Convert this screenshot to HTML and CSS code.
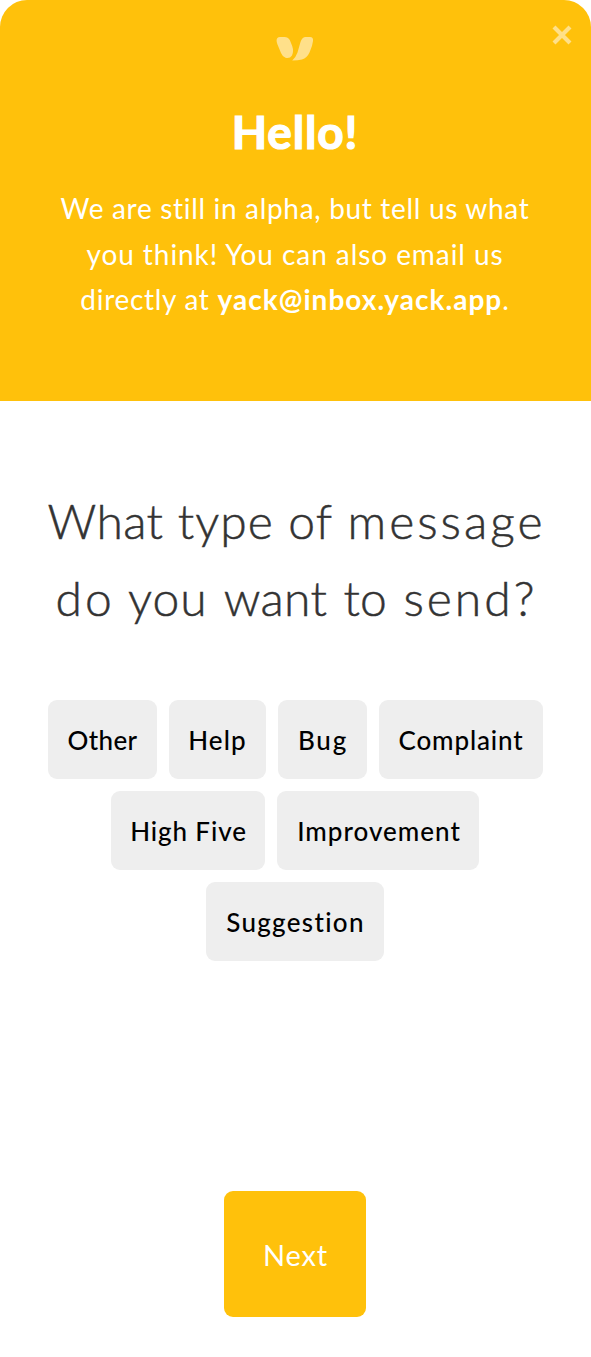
FILE: index.html
```html
<!DOCTYPE html>
<html lang="en">
<head>
<meta charset="utf-8">
<title>Yack</title>
<link rel="stylesheet" href="styles.css">
</head>
<body>
<main class="widget">
  <header class="header">
    <svg class="logo" viewBox="0 0 38 26" aria-hidden="true">
      <path d="M4 1H8.500Q12 1 13.800 4L16.200 10Q18 15.500 16 19.500Q13.700 23 9.500 21.800Q6.500 20.700 5 17L1.300 8Q-1 1.500 4 1Z"/>
      <path d="M29 1H34Q37.500 1 37 5Q36.500 10 33.500 16.500Q31 22 26 23.500Q22 24.500 16.200 24.500Q20 21 21.500 16.500L24.500 6Q26 1.300 29 1Z"/>
    </svg>
    <button class="close" aria-label="Close">
      <svg viewBox="0 0 20 20"><path d="M2 2 18 18M18 2 2 18"/></svg>
    </button>
    <h1 class="hello">Hello!</h1>
    <p class="intro">
      <span class="line intro-a">We are still in alpha, but tell us what</span>
      <span class="line intro-b">you think! You can also email us</span>
      <span class="line intro-c">directly at <b class="email">yack@inbox.yack.app</b>.</span>
    </p>
  </header>
  <section class="content">
    <h2 class="question">
      <span class="question-line">
        <span class="tight">What</span>
        <span class="snug">type</span>
        <span class="snug">of</span>
        <span class="wide">message</span>
      </span>
      <span class="question-line inset">
        <span class="wide">do</span>
        <span class="snug">you</span>
        <span class="tight">want</span>
        <span class="tight">to</span>
        <span class="wide">send?</span>
      </span>
    </h2>
    <div class="chips">
      <button class="chip other">Other</button>
      <button class="chip help">Help</button>
      <button class="chip bug">Bug</button>
      <button class="chip complaint">Complaint</button>
      <button class="chip high-five">High Five</button>
      <button class="chip improvement">Improvement</button>
      <button class="chip suggestion">Suggestion</button>
    </div>
  </section>
  <button class="next">Next</button>
</main>
</body>
</html>
```
FILE: styles.css
```css
* { box-sizing: border-box; }
body { margin: 0; background: #fff; font-family: Lato, "Open Sans", sans-serif; }
button { border: 0; padding: 0; font-family: inherit; }
.widget { height: 1357px; display: flex; flex-direction: column; align-items: center; padding-bottom: 40px; }
.header { position: relative; width: 100%; height: 401px; background: #ffc10b; border-radius: 27px 27px 0 0; color: #fff; text-align: center; padding: 36px 1px 0 0; }
.logo { display: block; width: 38px; height: 26px; margin: 0 auto; fill: #ffe08a; }
.close { position: absolute; top: 25px; right: 19px; width: 20px; height: 20px; background: none; }
.close svg { display: block; width: 20px; height: 20px; overflow: visible; stroke: #ffe08a; stroke-width: 4.2; fill: none; }
.hello { margin: 40px 0 0; font-size: 46px; line-height: 60px; font-weight: 700; letter-spacing: 0.8px; -webkit-text-stroke: 1.2px #fff; stroke-linejoin: round; }
.intro { margin: 24px 0 0; font-size: 28px; line-height: 45.500px; }
.line { display: block; white-space: nowrap; }
.intro-a { letter-spacing: 0.68px; }
.intro-b { letter-spacing: 0.93px; }
.intro-c { letter-spacing: 0.7px; }
.email { font-weight: 700; letter-spacing: 1.05px; }
.content { width: 495px; margin: 81px 1px 0 0; }
.question { margin: 0; color: #333; font-size: 48px; line-height: 77px; font-weight: 300; -webkit-text-stroke: 0.5px #333; }
.question-line { display: flex; justify-content: space-between; white-space: nowrap; }
.inset { padding: 0 8px 0 8px; }
.tight { letter-spacing: 0.3px; }
.snug { letter-spacing: 1px; }
.wide { letter-spacing: 3px; margin-right: -3px; }
.chips { display: flex; flex-wrap: wrap; justify-content: center; gap: 12px; margin-top: 64px; }
.chip { height: 79px; border-radius: 9px; background: #eee; color: #000; font-size: 26px; font-weight: 500; text-indent: 1px; }
.other { width: 109px; letter-spacing: 0.4px; }
.help { width: 97px; letter-spacing: 1.1px; }
.bug { width: 89px; letter-spacing: 1.8px; text-indent: 2px; }
.complaint { width: 164px; letter-spacing: 0.85px; }
.high-five { width: 154px; letter-spacing: 0.9px; }
.improvement { width: 202px; letter-spacing: 1px; text-indent: 2px; }
.suggestion { width: 178px; letter-spacing: 1.3px; }
.next { width: 142px; height: 126px; margin: auto 1px 0 0; border-radius: 9px; background: #ffc10b; color: #fff; font-size: 29px; letter-spacing: 0.8px; text-indent: 1px; }
```
